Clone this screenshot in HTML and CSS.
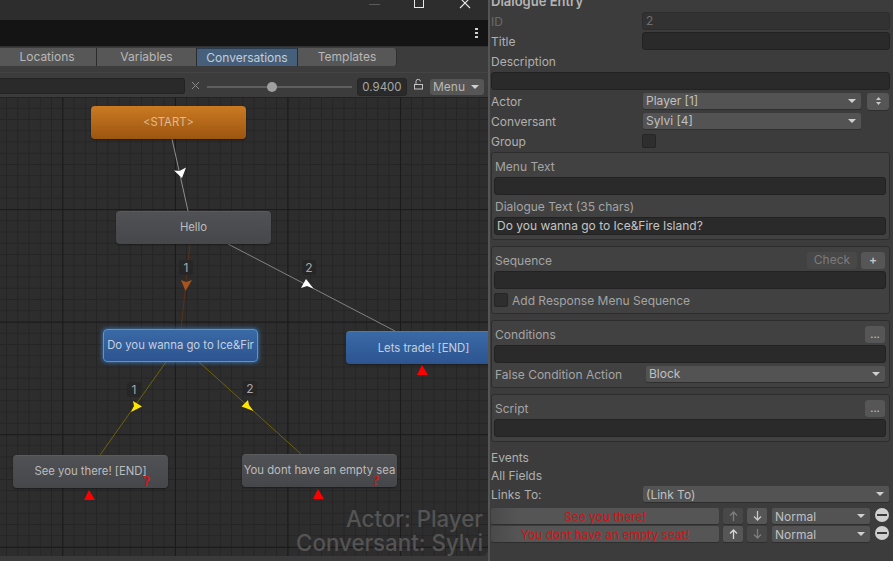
FILE: index.html
```html
<!DOCTYPE html>
<html lang="en">
<head>
<meta charset="utf-8">
<title>Dialogue Editor</title>
<link rel="stylesheet" href="styles.css">
</head>
<body>
<div class="app">
  <section class="editor">
    <header class="titlebar">
      <span class="win-min"></span>
      <span class="win-max"></span>
      <svg class="win-close" width="12" height="12" viewBox="0 0 12 12"><path d="M1 0 L11 10 M11 0 L1 10" stroke="#e8e8e8" stroke-width="1.1" fill="none"/></svg>
    </header>
    <div class="blackbar"><span class="kebab"><i></i><i></i><i></i></span></div>
    <nav class="tabs">
      <span class="tab">Locations</span>
      <span class="tab">Variables</span>
      <span class="tab active">Conversations</span>
      <span class="tab last">Templates</span>
    </nav>
    <div class="zoombar">
      <span class="search"></span>
      <svg class="clear" width="9" height="9" viewBox="0 0 9 9"><path d="M1 1 L8 8 M8 1 L1 8" stroke="#8a8a8a" stroke-width="1" fill="none"/></svg>
      <span class="slider"><i class="thumb"></i></span>
      <span class="zoomval">0.9400</span>
      <svg class="lock" width="9" height="11" viewBox="0 0 9 11"><path d="M2 5 V2.5 A2.2 2.2 0 0 1 6.4 2.5" stroke="#c4c4c4" fill="none"/><rect x="0.5" y="5.5" width="8" height="4.5" fill="none" stroke="#c4c4c4"/></svg>
      <span class="menu-btn">Menu<i class="caret"></i></span>
    </div>
    <div class="canvas">
      <svg class="links" width="488" height="459" viewBox="0 97 488 459">
        <line x1="172" y1="139" x2="188" y2="211" stroke="#8e8e8e"/>
        <line x1="190" y1="244" x2="181" y2="329" stroke="#5c3016"/>
        <line x1="228" y1="244" x2="395" y2="331" stroke="#828282"/>
        <line x1="166" y1="362" x2="100" y2="455" stroke="#6e6206"/>
        <line x1="199" y1="362" x2="301" y2="454" stroke="#6e6206"/>
        <polygon points="174,170.5 179.5,171 186,167.5 182,178" fill="#fff"/>
        <polygon points="181,280 186,282 192,280 185.5,291" fill="#a8521c"/>
        <polygon points="306,279 301,288 307,286 313.5,288.5" fill="#fff"/>
        <polygon points="133,401 142,406.5 131,412 134,406" fill="#ffe600"/>
        <polygon points="248,400 241.5,406.5 253.5,411 249,405" fill="#ffe600"/>
        <polygon points="422,365 417,375 428,375" fill="#f00"/>
        <polygon points="89,490 84,500 95,500" fill="#f00"/>
        <polygon points="318,489 313,499 324,499" fill="#f00"/>
      </svg>
      <div class="node orange n-start">&lt;START&gt;</div>
      <div class="node grey n-hello">Hello</div>
      <div class="node blue selected n-ask">Do you wanna go to Ice&amp;Fir</div>
      <div class="node blue n-trade">Lets trade! [END]</div>
      <div class="node grey n-see">See you there! [END]<b class="q">?</b></div>
      <div class="node grey n-seat">You dont have an empty sea<b class="q">?</b></div>
      <span class="badge b1">1</span>
      <span class="badge b2">2</span>
      <span class="badge b3">1</span>
      <span class="badge b4">2</span>
      <div class="watermark">Actor: Player<br>Conversant: Sylvi</div>
    </div>
  </section>

  <aside class="inspector">
    <div class="heading"><span>Dialogue Entry</span></div>
    <div class="row dim"><label>ID</label><span class="field dimfield">2</span></div>
    <div class="row"><label>Title</label><span class="field"></span></div>
    <div class="row"><label>Description</label></div>
    <div class="row"><span class="field"></span></div>
    <div class="row"><label>Actor</label><span class="select sel-short">Player [1]<i class="caret"></i></span><span class="spin"><svg width="7" height="10" viewBox="0 0 7 10"><path d="M3.5 1 L6 4 H1Z M3.5 9 L6 6 H1Z" fill="#c8c8c8"/></svg></span></div>
    <div class="row"><label>Conversant</label><span class="select sel-short">Sylvi [4]<i class="caret"></i></span></div>
    <div class="row"><label>Group</label><span class="check"></span></div>

    <div class="box box-first">
      <div class="boxrow"><label>Menu Text</label></div>
      <span class="field wide"></span>
      <div class="boxrow second"><label>Dialogue Text (35 chars)</label></div>
      <span class="field wide text">Do you wanna go to Ice&amp;Fire Island?</span>
    </div>

    <div class="box tall">
      <div class="boxrow"><label>Sequence</label><span class="btn btn-check">Check</span><span class="btn btn-plus">+</span></div>
      <span class="field wide"></span>
      <div class="tailrow checkrow"><span class="check"></span><label>Add Response Menu Sequence</label></div>
    </div>

    <div class="box tall">
      <div class="boxrow"><label>Conditions</label><span class="btn btn-dots">...</span></div>
      <span class="field wide"></span>
      <div class="tailrow"><label>False Condition Action</label><span class="select sel-block">Block<i class="caret"></i></span></div>
    </div>

    <div class="box">
      <div class="boxrow"><label>Script</label><span class="btn btn-dots">...</span></div>
      <span class="field wide"></span>
    </div>

    <div class="row plain"><label>Events</label></div>
    <div class="row plain"><label>All Fields</label></div>
    <div class="row links-to"><label>Links To:</label><span class="select sel-link">(Link To)<i class="caret"></i></span></div>
    <div class="linkrow">
      <span class="linkbtn">See you there!</span>
      <span class="arrowbtn off"><svg width="9" height="10" viewBox="0 0 9 10"><path d="M4.5 10 V1 M1 4.5 L4.5 1 L8 4.5" stroke="#7e7e7e" stroke-width="1.3" fill="none"/></svg></span>
      <span class="arrowbtn"><svg width="9" height="10" viewBox="0 0 9 10"><path d="M4.5 0 V9 M1 5.5 L4.5 9 L8 5.5" stroke="#c8c8c8" stroke-width="1.3" fill="none"/></svg></span>
      <span class="select sel-normal">Normal<i class="caret"></i></span>
      <span class="minus"></span>
    </div>
    <div class="linkrow">
      <span class="linkbtn">You dont have an empty seat!</span>
      <span class="arrowbtn"><svg width="9" height="10" viewBox="0 0 9 10"><path d="M4.5 10 V1 M1 4.5 L4.5 1 L8 4.5" stroke="#d8d8d8" stroke-width="1.3" fill="none"/></svg></span>
      <span class="arrowbtn off"><svg width="9" height="10" viewBox="0 0 9 10"><path d="M4.5 0 V9 M1 5.5 L4.5 9 L8 5.5" stroke="#7e7e7e" stroke-width="1.3" fill="none"/></svg></span>
      <span class="select sel-normal">Normal<i class="caret"></i></span>
      <span class="minus"></span>
    </div>
  </aside>
</div>
</body>
</html>
```

FILE: styles.css
```css
* { box-sizing: border-box; }
html, body { margin: 0; height: 100%; overflow: hidden; background: #3a3a3a; }
body { font-family: Inter, "Liberation Sans", sans-serif; font-size: 12px; color: #b4b4b4; }
.app { display: flex; width: 893px; height: 561px; overflow: hidden; }

/* left window */
.editor { width: 488px; flex: none; display: flex; flex-direction: column; background: #3a3a3a; }
.titlebar { height: 20px; flex: none; background: #2d2d2d; display: flex; align-items: flex-start; overflow: hidden; }
.win-min { width: 11px; height: 1px; background: #5a5a5a; margin: 4px 0 0 369px; }
.win-max { width: 10px; height: 10px; border: 1px solid #e8e8e8; border-top: none; margin: -2px 0 0 34px; }
.win-close { margin: -2px 0 0 35px; }
.blackbar { height: 26px; flex: none; background: #141414; display: flex; justify-content: flex-end; align-items: center; padding-right: 10px; }
.kebab { display: flex; flex-direction: column; gap: 2px; }
.kebab i { width: 3px; height: 2px; background: #d0d0d0; display: block; }
.tabs { height: 26px; flex: none; display: flex; padding-top: 1px; align-items: flex-start; background: #3c3c3c; border-top: 1px solid #303030; }
.tab { width: 100px; height: 18px; line-height: 17px; text-align: center; background: #575757; color: #b8b8b8; border-right: 1px solid #2b2b2b; font-size: 12px; }
.tab:first-child { width: 97px; padding-right: 2px; }
.tab.active { background: #46607c; color: #c4ced8; width: 101px; border-top: 1px solid #2a3c50; }
.tab.last { border-right: 1px solid #2f2f2f; border-radius: 0 3px 3px 0; width: 99px; }
.zoombar { height: 25px; flex: none; display: flex; align-items: center; padding-top: 4px; background: #3c3c3c; border-top: 1px solid #444; }
.search { width: 185px; height: 16px; margin-bottom: 2px; background: #2a2a2a; border: 1px solid #232323; border-left: none; border-radius: 0 3px 3px 0; }
.clear { margin: 0 0 3px 6px; }
.slider { width: 145px; height: 2px; background: #5e5e5e; margin-left: 7px; position: relative; display: block; }
.thumb { position: absolute; left: 60px; top: -4px; width: 10px; height: 10px; border-radius: 50%; background: #a0a0a0; }
.zoomval { width: 50px; height: 18px; margin-left: 5px; line-height: 17px; background: #2a2a2a; border: 1px solid #262626; border-radius: 3px; text-align: center; color: #a8a8a8; font-size: 11.5px; }
.lock { margin: -6px 0 0 7px; }
.menu-btn { width: 54px; height: 16px; margin-left: 7px; line-height: 16px; background: #565656; border-radius: 3px; padding-left: 3px; color: #b8b8b8; position: relative; }
.caret { position: absolute; right: 5px; top: 50%; margin-top: -2px; width: 0; height: 0; border-left: 4px solid transparent; border-right: 4px solid transparent; border-top: 4px solid #d0d0d0; }
.canvas { position: relative; height: 459px; flex: none; overflow: hidden; border-radius: 0 0 6px 0;
  background-color: #2d2d2d;
  background-image:
    linear-gradient(#1a1a1a 1px, transparent 1px),
    linear-gradient(90deg, #1a1a1a 1px, transparent 1px),
    linear-gradient(#252525 1px, transparent 1px),
    linear-gradient(90deg, #252525 1px, transparent 1px);
  background-size: 112.6px 112.6px, 112.6px 112.6px, 11.26px 11.26px, 11.26px 11.26px;
  background-position: 0 -0.5px, 62.3px 0, 0 -0.5px, 62.3px 0;
}
.links { position: absolute; left: 0; top: 0; }
.node { position: absolute; width: 155px; height: 33px; border-radius: 4px; text-align: center; line-height: 31px; font-size: 11.3px; white-space: nowrap; box-shadow: 0 1px 2px rgba(0,0,0,.4); }
.orange { background: linear-gradient(#cb7a22, #9c5510); color: #dfbd94; line-height: 33px; }
.grey { background: linear-gradient(#505154, #46474b); color: #bcbcbc; border-top: 1px solid #5a5b5e; line-height: 30px; }
.blue { background: linear-gradient(#3a6aa6, #2c5490); color: #c4d0e0; border-top: 1px solid #5079ad; }
.selected { border: 1px solid #4a9adf; box-shadow: 0 0 5px #3f86cc; line-height: 30px; }
.n-start { left: 91px; top: 9px; }
.n-hello { left: 116px; top: 114px; }
.n-ask { left: 103px; top: 232px; }
.n-trade { left: 346px; top: 234px; line-height: 32px; }
.n-see { left: 13px; top: 358px; }
.n-seat { left: 242px; top: 357px; }
.q { position: absolute; left: 130px; top: 20px; color: #d81414; font: bold 12px/12px "DejaVu Serif", serif; }
.badge { position: absolute; width: 14px; height: 15px; border-radius: 3px; background: #262626; text-align: center; line-height: 15px; color: #a8a8a8; font-size: 12px; }
.b1 { left: 179px; top: 163px; }
.b2 { left: 302px; top: 163px; }
.b3 { left: 127px; top: 285px; }
.b4 { left: 243px; top: 284px; }
.watermark { position: absolute; right: 5px; bottom: 2px; text-align: right; font-size: 22.3px; line-height: 23.5px; color: #545454; font-weight: 500; white-space: nowrap; }

/* inspector */
.inspector { flex: 1; min-width: 0; border-left: 2px solid #555; padding: 0 3px 0 1px; display: flex; flex-direction: column; background: #3c3c3c; }
.heading { height: 11px; flex: none; overflow: hidden; font-size: 13px; font-weight: 600; color: #b4b4b4; line-height: 12px; }
.heading span { position: relative; top: -5px; display: block; }
.row { height: 20px; flex: none; display: flex; align-items: center; }
.row label { width: 151px; flex: none; color: #b0b0b0; }
.row.dim label { color: #6a6a6a; }
.field { display: block; height: 18px; flex: 1; min-width: 0; background: #2a2a2a; border: 1px solid #222; border-radius: 3px; line-height: 16px; padding-left: 2px; color: #c0c0c0; }
.dimfield { background: #323232; border-color: #2c2c2c; color: #6e6e6e; padding-left: 3px; }
.select { display: block; height: 16px; background: #535353; border-radius: 2px; line-height: 15px; padding-left: 3px; position: relative; color: #c0c0c0; flex: none; box-shadow: 0 1px 0 #2e2e2e; }
.row .select { margin-left: 1px; }
.sel-short { width: 218px; }
.spin { width: 22px; height: 17px; margin-left: 6px; border-radius: 3px; background: #565656; display: flex; align-items: center; justify-content: center; box-shadow: 0 1px 0 #2e2e2e; }
.check { display: block; width: 14px; height: 14px; background: #2e2e2e; border: 1px solid #252525; border-radius: 2px; flex: none; }
.box { margin: 0 0 6px; padding: 4px 3px 4px 2px; border: 1px solid #2d2d2d; border-radius: 3px; background: #414141; flex: none; }
.box-first { margin-top: 1px; }
.tall { padding-bottom: 5px; }
.boxrow { height: 18px; display: flex; align-items: center; margin-bottom: 2px; padding-right: 1px; }
.boxrow.second { margin-top: 2px; }
.boxrow label { color: #a4a4a4; flex: 1; padding-left: 1px; }
.text { color: #c4c4c4; }
.tailrow { height: 16px; margin-top: 3px; display: flex; align-items: center; padding-right: 1px; }
.tailrow label { width: 152px; flex: none; color: #a4a4a4; padding-left: 1px; }
.checkrow { gap: 3px; }
.checkrow label { width: auto; }
.sel-block { width: 239px; }
.btn { height: 17px; border-radius: 3px; background: #565656; display: block; text-align: center; line-height: 15px; color: #c8c8c8; }
.btn-check { width: 50px; background: #484848; color: #7c7c7c; }
.btn-plus { width: 24px; margin-left: 4px; font-weight: 600; }
.btn-dots { width: 20px; font-size: 11px; line-height: 16px; }
.plain { height: 18px; }
.links-to { margin-bottom: 4px; }
.sel-link { width: 246px; line-height: 17px; }
.linkrow { display: flex; align-items: flex-start; height: 18px; flex: none; }
.linkbtn { width: 228px; height: 16px; background: linear-gradient(90deg, #4a4a4a, #555 12%); border-radius: 2px; text-align: center; line-height: 17px; color: #d01414; box-shadow: 0 1px 0 #2e2e2e; }
.arrowbtn { width: 20px; height: 16px; margin-left: 4px; background: #565656; border-radius: 2px; display: flex; align-items: center; justify-content: center; box-shadow: 0 1px 0 #2e2e2e; }
.arrowbtn.off { background: #484848; }
.sel-normal { width: 98px; margin-left: 5px; padding-left: 3px; line-height: 17px; }
.minus { width: 14px; height: 14px; margin: 0 0 0 5px; border-radius: 50%; background: #d0d0d0; position: relative; flex: none; }
.minus::after { content: ""; position: absolute; left: 2px; right: 2px; top: 6px; height: 2px; background: #3a3a3a; }
```
